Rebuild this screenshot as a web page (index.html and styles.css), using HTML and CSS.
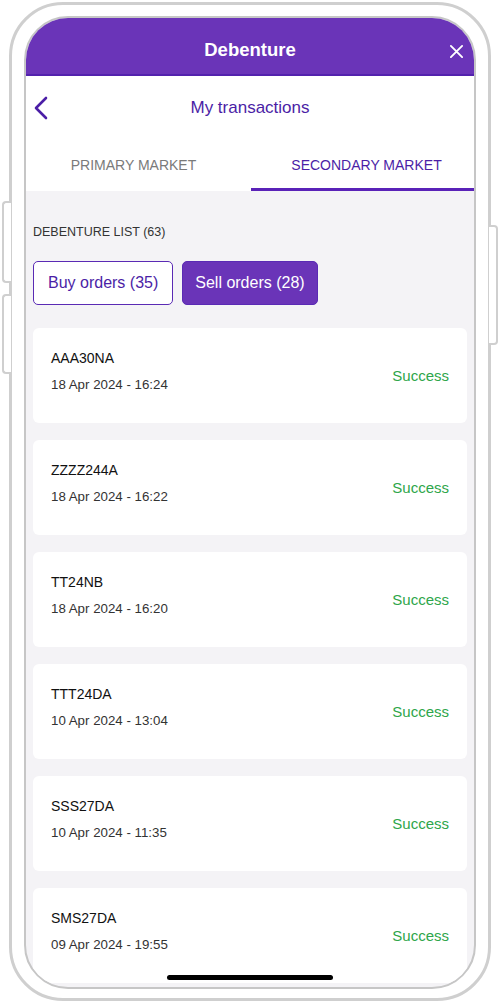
FILE: index.html
```html
<!DOCTYPE html>
<html>
<head>
<meta charset="utf-8">
<link rel="stylesheet" href="styles.css">
</head>
<body>
<div class="device">
  <span class="btn btn-l1"></span>
  <span class="btn btn-l2"></span>
  <span class="btn btn-r"></span>
  <div class="screen">
    <header class="topbar">
      <span class="topbar-title">Debenture</span>
      <svg class="close" width="16" height="16" viewBox="0 0 16 16"><path d="M2 2 L14 14 M14 2 L2 14" stroke="#fff" stroke-width="2" stroke-linecap="round" fill="none"/></svg>
    </header>
    <div class="subbar">
      <svg class="back" width="16" height="24" viewBox="0 0 16 24"><path d="M13 2 L3 12 L13 22" stroke="#4b1ea6" stroke-width="2.6" stroke-linecap="round" stroke-linejoin="round" fill="none"/></svg>
      <span class="subbar-title">My transactions</span>
    </div>
    <nav class="tabs">
      <div class="tab">PRIMARY MARKET</div>
      <div class="tab tab-active">SECONDARY MARKET</div>
    </nav>
    <main class="content">
      <div class="list-label">DEBENTURE LIST (63)</div>
      <div class="filters">
        <button class="filter">Buy orders (35)</button>
        <button class="filter filter-active">Sell orders (28)</button>
      </div>
      <div class="cards">
        <div class="card"><div class="card-info"><div class="code">AAA30NA</div><div class="date">18 Apr 2024 - 16:24</div></div><div class="status">Success</div></div>
        <div class="card"><div class="card-info"><div class="code">ZZZZ244A</div><div class="date">18 Apr 2024 - 16:22</div></div><div class="status">Success</div></div>
        <div class="card"><div class="card-info"><div class="code">TT24NB</div><div class="date">18 Apr 2024 - 16:20</div></div><div class="status">Success</div></div>
        <div class="card"><div class="card-info"><div class="code">TTT24DA</div><div class="date">10 Apr 2024 - 13:04</div></div><div class="status">Success</div></div>
        <div class="card"><div class="card-info"><div class="code">SSS27DA</div><div class="date">10 Apr 2024 - 11:35</div></div><div class="status">Success</div></div>
        <div class="card card-last"><div class="card-info"><div class="code">SMS27DA</div><div class="date">09 Apr 2024 - 19:55</div></div><div class="status">Success</div></div>
      </div>
      <div class="home-indicator"></div>
    </main>
  </div>
</div>
</body>
</html>
```

FILE: styles.css
```css
* { box-sizing: border-box; }
html, body { margin: 0; padding: 0; background: #fff; }
body {
  width: 500px;
  height: 1004px;
  overflow: hidden;
  font-family: "Liberation Sans", Arial, sans-serif;
}
.device {
  position: relative;
  margin: 2px 0 0 9px;
  width: 482px;
  height: 999px;
  border: 3px solid #cfcfcf;
  border-radius: 54px;
  padding: 11px 12px 9px 12px;
  background: #fff;
}
.btn {
  position: absolute;
  width: 9px;
  border: 2px solid #cfcfcf;
  background: #fff;
}
.btn-l1 { left: -10px; top: 196px; height: 82px; border-right: none; border-radius: 4px 0 0 4px; }
.btn-l2 { left: -10px; top: 289px; height: 80px; border-right: none; border-radius: 4px 0 0 4px; }
.btn-r { right: -10px; top: 220px; height: 120px; border-left: none; border-radius: 0 4px 4px 0; }
.screen {
  height: 100%;
  border: 2px solid #c6c6c6;
  border-radius: 44px;
  overflow: hidden;
  display: flex;
  flex-direction: column;
  background: #f4f3f6;
  position: relative;
}
.topbar {
  flex: 0 0 58px;
  background: #6a34b8;
  border-bottom: 2px solid #5322ad;
  display: flex;
  align-items: center;
  justify-content: center;
  position: relative;
  padding-top: 8px;
}
.topbar-title {
  color: #fff;
  font-weight: 700;
  font-size: 18.5px;
}
.close {
  position: absolute;
  right: 10px;
  top: 26px;
  width: 15px;
  height: 15px;
}
.subbar {
  flex: 0 0 61px;
  background: #fff;
  display: flex;
  align-items: center;
  justify-content: center;
  position: relative;
  padding-top: 3px;
}
.back {
  position: absolute;
  left: 7px;
  top: 20px;
}
.subbar-title {
  color: #4b1ea6;
  font-size: 17px;
}
.tabs {
  flex: 0 0 54px;
  background: #fff;
  display: flex;
}
.tab {
  flex: 1;
  display: flex;
  align-items: center;
  justify-content: center;
  font-size: 14px;
  color: #7a7a7a;
  padding-top: 4px;
  border-bottom: 3px solid transparent;
}
.tab:first-child { padding-right: 10px; }
.tab-active {
  color: #4b1ea6;
  border-bottom-color: #5a22b8;
  padding-left: 8px;
}
.content {
  flex: 1;
  padding: 34px 7px 0 7px;
  position: relative;
  overflow: hidden;
}
.list-label {
  font-size: 12.5px;
  color: #333;
  line-height: 14px;
}
.filters {
  display: flex;
  gap: 9px;
  margin-top: 22px;
}
.filter {
  font-family: inherit;
  font-size: 16px;
  height: 44px;
  padding: 0 14px;
  border: 1.5px solid #5a2ab4;
  border-radius: 5px;
  background: #fff;
  color: #4b1ea6;
  white-space: nowrap;
}
.filter-active {
  background: #6a34b8;
  color: #fff;
  padding: 0 12px;
}
.cards {
  display: flex;
  flex-direction: column;
  gap: 17px;
  margin-top: 23px;
}
.card {
  flex: 0 0 95px;
  height: 95px;
  background: #fff;
  border-radius: 6px;
  display: flex;
  align-items: center;
  padding: 0 18px 0 18px;
}
.card-info {
  flex: 1;
  display: flex;
  flex-direction: column;
  gap: 10px;
  margin-top: -8px;
}
.code {
  font-size: 14px;
  color: #111;
  line-height: 17px;
}
.date {
  font-size: 13.3px;
  color: #333;
  line-height: 16px;
}
.status {
  font-size: 15px;
  color: #2ea64a;
  margin-top: -1px;
}
.home-indicator {
  position: absolute;
  left: 141px;
  bottom: 7px;
  width: 166px;
  height: 5px;
  border-radius: 3px;
  background: #000;
}
```
